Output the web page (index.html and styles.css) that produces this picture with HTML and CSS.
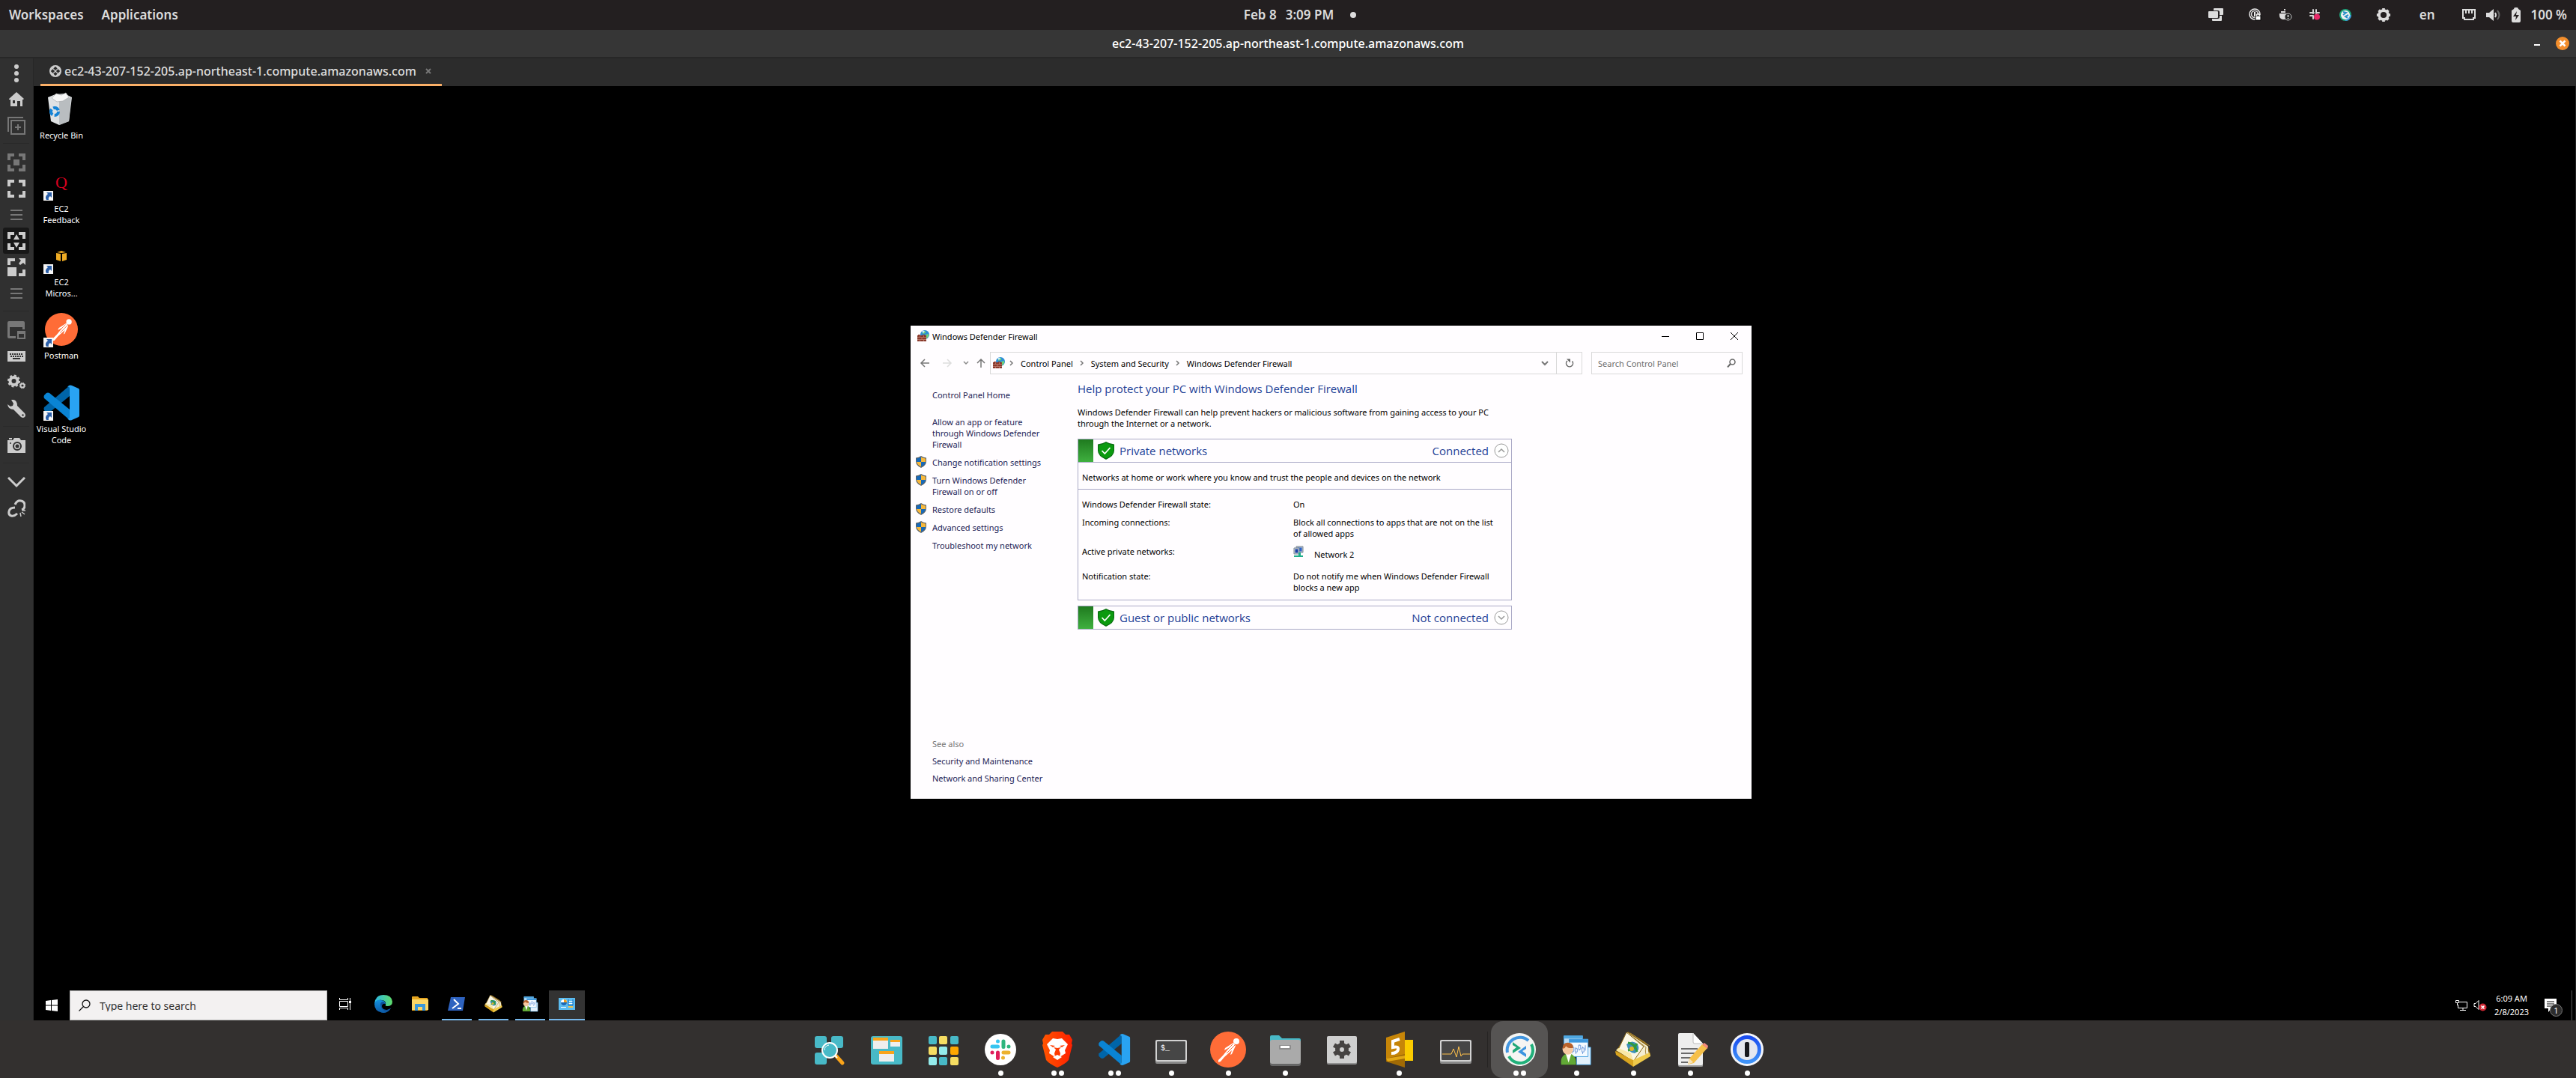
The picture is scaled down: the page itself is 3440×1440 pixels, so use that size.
FILE: index.html
```html
<!DOCTYPE html>
<html lang="en">
<head>
<meta charset="utf-8">
<title>ec2-43-207-152-205.ap-northeast-1.compute.amazonaws.com</title>
<link rel="stylesheet" href="styles.css">
</head>
<body>
<svg class="defs" aria-hidden="true">
  <defs>
    <linearGradient id="edge-a" x1="0" y1="0" x2="1" y2="0"><stop offset="0" stop-color="#2bb8e8"/><stop offset="1" stop-color="#5fdc6a"/></linearGradient>
    <linearGradient id="edge-b" x1="0" y1="0" x2="0" y2="1"><stop offset="0" stop-color="#1490df"/><stop offset="1" stop-color="#0c59a4"/></linearGradient>
    <linearGradient id="brave-g" x1="0" y1="0" x2="1" y2="0"><stop offset="0" stop-color="#ff5500"/><stop offset="1" stop-color="#ff2000"/></linearGradient>
    <linearGradient id="one-g" x1="0" y1="0" x2="0" y2="1"><stop offset="0" stop-color="#1a4df0"/><stop offset="1" stop-color="#3f93f8"/></linearGradient>
  </defs>
  <symbol id="vscode" viewBox="0 0 48 48">
    <path d="M35 1 L1 30 q-1 2 0 4 l3 3 q2 1 4 0 L35 15z" fill="#0065a9"/>
    <path d="M35 47 L1 18 q-1-2 0-4 l3-3 q2-1 4 0 L35 33z" fill="#0a84d4"/>
    <path d="M34 1 q2-1 4 0 l9 4 q1 1 1 2 v34 q0 1-1 2 l-9 4 q-2 1-4 0 l-2-2 q3 1 3-2 V5 q0-3-3-2z" fill="#29a3f2"/>
  </symbol>
  <symbol id="postman" viewBox="0 0 48 48">
    <circle cx="24" cy="24" r="24" fill="#ff6c37"/>
    <circle cx="35" cy="13" r="4" fill="#fff"/>
    <path d="M31 15 L20 22 l-1 3 7-4 -9 11 -6 6 v3 l3-1 5-6 10-9 -2 6 2-1 5-11z" fill="#fff"/>
    <path d="M33 18 L22 29 M30 17 L23 24" stroke="#ff6c37" stroke-width="1"/>
  </symbol>
  <symbol id="shortcut" viewBox="0 0 13 13">
    <path d="M0 0h13v13H0z" fill="#f5f5f5"/><path d="M4 2h7v7L9 7q-3 2-2 5H4Q1 8 6 4z" fill="#2b5fa8"/>
  </symbol>
  <symbol id="firewall" viewBox="0 0 16 16">
    <circle cx="10" cy="6" r="6" fill="#2d8fd5"/><path d="M8 1q4 0 3 3l-4 1zM11 6l4-1q1 4-3 6z" fill="#6fd07b"/><path d="M6 2q2-2 4-1l-2 3z" fill="#cdeefc"/>
    <path d="M1 6h3v1h3V6h3v1h2v8H0V7h1z" fill="#8a3a2c"/><path d="M0 9.500h12M0 12.500h12M3.500 7v2.500M8.500 7v2.500M6 10v2.500M3.500 13v2M8.500 13v2" stroke="#c58b7c" stroke-width=".7"/>
  </symbol>
  <symbol id="uac" viewBox="0 0 14 16">
    <path d="M7 0q3 2 7 2.500V7q0 6-7 9Q0 13 0 7V2.500Q4 2 7 0z" fill="#5c6368"/>
    <path d="M7 1.500V8H1V3.500Q5 3 7 1.500z" fill="#1769b8"/><path d="M7 1.500V8h6V3.500Q9 3 7 1.500z" fill="#f7b83b"/>
    <path d="M1 8h6v6.500Q2 12 1 8z" fill="#f7b83b"/><path d="M13 8H7v6.500Q12 12 13 8z" fill="#1769b8"/>
  </symbol>
  <symbol id="okshield" viewBox="0 0 22 24">
    <path d="M11 0q5 3 11 3.500V12q0 7-11 12Q0 19 0 12V3.500Q6 3 11 0z" fill="#0a6d12"/>
    <path d="M11 1.500q5 2.500 9.800 3V12q0 6.500-9.800 10.600Q1.200 18.500 1.200 12V4.500Q6 4 11 1.500z" fill="#0b9a0f"/>
    <path d="M5.500 12l3.800 4L16.500 8" fill="none" stroke="#fff" stroke-width="1.700"/>
  </symbol>
  <symbol id="book" viewBox="0 0 48 48">
    <path d="M17 0 L40 14 q4 3 7 17 L24 46 0 28z" fill="#8a6410"/>
    <path d="M16 1 L44 20 q-1 8 3 12 L24 44z" fill="#f4edcf"/><path d="M18 3 L41 21 q-2 8 2 13M20 2 L46 19" fill="none" stroke="#a8873a" stroke-width="1"/>
    <path d="M15 1 L38 20 24 40 3 26z" fill="#fbf7e6" stroke="#8a6a1c" stroke-width="1"/>
    <path d="M0 26 l24 12 v9 L1 31z" fill="#d9a520"/><path d="M24 38 l22-10 1 5-23 14z" fill="#efc94a"/><path d="M1 25 l23 13-3-9-17-7z" fill="#f9e9a5"/>
    <path d="M15 17q8-7 15 0q4 8-4 12q-8 0-11-12z" fill="#3c8fbb"/><path d="M17 15q10 1 12 12M29 16q-4 8-12 9" stroke="#2f9a3f" stroke-width="3" fill="none"/><circle cx="22" cy="23" r="3" fill="#e0b52b"/>
  </symbol>
  <symbol id="trader" viewBox="0 0 48 48">
    <path d="M6 3h28v22H6z" fill="#b9dcf5" stroke="#3f9bdc"/><path d="M6 3h28v4H6z" fill="#4fa8e2"/>
    <path d="M25 20h21v26H25z" fill="#e3f1fc" stroke="#3f9bdc"/><path d="M14 8h28v26H14z" fill="#f4faff" stroke="#3f9bdc"/><path d="M14 8h28v5H14z" fill="#3c97dd"/>
    <path d="M19 17v12M24 20v10M29 16v9M34 19v11M38 17v8" stroke="#5e8fd8"/><path d="M18 20h3v6h-3zM23 22h3v5h-3zM28 17h3v6h-3zM33 21h3v6h-3z" fill="#fff" stroke="#5e8fd8"/>
    <path d="M2 46q-2-15 11-17 12 2 11 17z" fill="#62a936"/><path d="M9 30l4 13 4-13z" fill="#fff"/><circle cx="12" cy="23" r="8" fill="#f6c9a0"/><path d="M4 22q0-9 8-9t8 8q-8 1-11-3-1 4-5 4z" fill="#b9622b"/>
  </symbol>
</svg>

<header class="topbar">
  <nav class="topbar-left"><button>Workspaces</button><button>Applications</button></nav>
  <button class="clock"><span>Feb 8</span><span>3:09 PM</span><i class="dot"></i></button>
  <div class="tray">
    <button class="tray-tile" aria-label="Tiling"><svg width="20" height="18" viewBox="0 0 20 18"><path d="M8 0h11q1 0 1 1v7q0 1-1 1h-4V5q0-2-2-2H7V1q0-1 1-1zM1 4h11q1 0 1 1v7q0 1-1 1H1q-1 0-1-1V5q0-1 1-1zM5 14h8q2 0 2-2v-2h3v6q0 1-1 1H6q-1 0-1-1z" fill="#dcdcdc"/></svg></button>
    <button aria-label="1Password"><svg width="18" height="18" viewBox="0 0 18 18"><circle cx="8" cy="8" r="7" fill="none" stroke="#eee" stroke-width="1.500"/><circle cx="8" cy="8" r="4.500" fill="none" stroke="#ddd" stroke-width="1.500"/><path d="M8 5v6" stroke="#eee" stroke-width="2"/><path d="M9 10h7v6H9z" fill="#fff" stroke="#000"/><path d="M10.500 10V8.500q2-2 4 0V10" stroke="#fff" stroke-width="1.300" fill="none"/></svg></button>
    <button aria-label="Docker"><svg width="18" height="18" viewBox="0 0 18 18"><path d="M1 7h10l4 1q-1 7-8 7T1 7zM3 4h6v2H3zM7 1h2v2H7z" fill="#ddd"/><circle cx="12.500" cy="11.500" r="4.500" fill="#222" stroke="#ccc"/><path d="M12.500 9v3m0 1v1" stroke="#eee" stroke-width="1.500"/></svg></button>
    <button aria-label="Slack"><svg width="18" height="18" viewBox="0 0 18 18"><path d="M6 2v5M10 2v5M2 6h5M10 6h4M2 10h4M6 10v4" stroke="#d6d6d6" stroke-width="2" stroke-linecap="round"/><circle cx="11" cy="11.500" r="4" fill="#e62a68"/></svg></button>
    <button aria-label="Remmina"><svg width="18" height="18" viewBox="0 0 18 18"><circle cx="9" cy="9" r="8" fill="#1fa67c"/><path d="M17 9a8 8 0 0 1-8 8l2-8z" fill="#3f9ce0"/><circle cx="9" cy="9" r="6" fill="#f1f1f1"/><path d="M6 5l4 1-4 3M12 13l-3-2 4-2" fill="none" stroke="#2a90c8" stroke-width="2"/></svg></button>
    <button class="tray-gear" aria-label="Settings"><svg width="20" height="20" viewBox="0 0 22 22"><path d="M11 1v20M1 11h20M4 4l14 14M18 4L4 18" stroke="#dcdcdc" stroke-width="4"/><circle cx="11" cy="11" r="6.500" fill="#231f20" stroke="#dcdcdc" stroke-width="4"/></svg></button>
    <button class="lang">en</button>
    <button class="tray-status" aria-label="Network, sound and battery">
      <svg width="20" height="18" viewBox="0 0 20 18"><path d="M2 2h16v11h-2v2H4v-2H2z" fill="none" stroke="#dcdcdc" stroke-width="2"/><path d="M6 3v4M10 3v4M14 3v4" stroke="#dcdcdc" stroke-width="2"/></svg>
      <svg width="20" height="18" viewBox="0 0 20 18"><path d="M0 6h4l6-5v16l-6-5H0z" fill="#dcdcdc"/><path d="M12 6q2 3 0 6" fill="none" stroke="#dcdcdc" stroke-width="2"/><path d="M15 3q5 6 0 12" fill="none" stroke="#666" stroke-width="2"/></svg>
      <svg width="14" height="20" viewBox="0 0 14 20"><path d="M4 2q0-2 2-2h2q2 0 2 2l3 2v14q0 2-2 2H3q-2 0-2-2V4z" fill="#dcdcdc"/><path d="M8 5L3 12h4l-1 5 5-7H7z" fill="#231f20"/></svg>
      <span>100 %</span>
    </button>
  </div>
</header>

<div class="titlebar">
  <h1>ec2-43-207-152-205.ap-northeast-1.compute.amazonaws.com</h1>
  <div class="titlebar-buttons">
    <button aria-label="Minimize"><svg width="18" height="20" viewBox="0 0 18 20"><path d="M5 12h8" stroke="#fff" stroke-width="2"/></svg></button>
    <button aria-label="Close"><svg width="20" height="20" viewBox="0 0 20 20"><circle cx="10" cy="10" r="9" fill="#f28e2c"/><path d="M6.500 6.500l7 7m0-7l-7 7" stroke="#fff" stroke-width="2.500"/></svg></button>
  </div>
</div>

<div class="client">
  <aside class="tools">
    <button aria-label="Menu"><svg viewBox="0 0 24 24"><circle cx="12" cy="3" r="3" fill="#ccc"/><circle cx="12" cy="12" r="3" fill="#ccc"/><circle cx="12" cy="21" r="3" fill="#ccc"/></svg></button>
    <button aria-label="Home"><svg viewBox="0 0 24 24"><path d="M12 2l10 9-1 1h-1v9h-3v-7h-4v7H4v-9H2v-1z" fill="#ccc"/><path d="M7 13h3v4H7z" fill="#303030"/></svg></button>
    <button aria-label="Duplicate connection"><svg viewBox="0 0 24 24"><path d="M1 20V1h20M5 5h18v18H5zM14 10v8M10 14h8" fill="none" stroke="#777" stroke-width="2"/></svg></button>
    <hr>
    <button aria-label="Resize to fit"><svg viewBox="0 0 24 24"><path d="M2 9V2h7M15 2h7v7M22 15v7h-7M9 22H2v-7" fill="none" stroke="#777" stroke-width="4"/><path d="M8 8h8v8H8z" fill="#777"/></svg></button>
    <button aria-label="Fullscreen"><svg viewBox="0 0 24 24"><path d="M2 9V2h7M15 2h7v7M22 15v7h-7M9 22H2v-7" fill="none" stroke="#ccc" stroke-width="4"/></svg></button>
    <button aria-label="Fullscreen options"><svg viewBox="0 0 24 24"><path d="M4 6h16M4 12h16M4 18h16" stroke="#777" stroke-width="2"/></svg></button>
    <button class="on" aria-label="Dynamic resolution"><svg viewBox="0 0 24 24"><path d="M2 9V2h7M15 2h7v7M22 15v7h-7M9 22H2v-7" fill="none" stroke="#ccc" stroke-width="4"/><path d="M12 3l4 7H8zM12 21l4-7H8z" fill="#ccc"/></svg></button>
    <button aria-label="Scaled mode"><svg viewBox="0 0 24 24"><path d="M2 9V2h8M22 15v7h-7" fill="none" stroke="#ccc" stroke-width="4"/><path d="M0 12h12v12H0zM15 0h9v9l-3-3-4 3-2-2 3-4z" fill="#ccc"/></svg></button>
    <button aria-label="Scaling options"><svg viewBox="0 0 24 24"><path d="M4 6h16M4 12h16M4 18h16" stroke="#777" stroke-width="2"/></svg></button>
    <hr>
    <button aria-label="Multi monitor"><svg viewBox="0 0 24 24"><path d="M2 0h19q2 0 2 2v9h-3V8H3v12h8v3H2q-2 0-2-2V2q0-2 2-2zM13 13h11v11H13zM15 17v5h7v-5z" fill="#777" fill-rule="evenodd"/></svg></button>
    <button aria-label="Grab keyboard"><svg viewBox="0 0 24 24"><path d="M0 5h24v14H0z" fill="#ccc"/><path d="M3 9h18M4 12h17" stroke="#303030" stroke-width="2" stroke-dasharray="2 1"/><path d="M7 15h10" stroke="#303030" stroke-width="2"/></svg></button>
    <button aria-label="Preferences"><svg viewBox="0 0 24 24"><circle cx="8.500" cy="10" r="5" fill="none" stroke="#ccc" stroke-width="4"/><circle cx="8.500" cy="10" r="7.500" fill="none" stroke="#ccc" stroke-width="2" stroke-dasharray="3 2.890"/><circle cx="20" cy="16" r="2.600" fill="none" stroke="#ccc" stroke-width="2"/><circle cx="20" cy="16" r="3.800" fill="none" stroke="#ccc" stroke-width="1" stroke-dasharray="1.500 1.480"/></svg></button>
    <button aria-label="Tools"><svg viewBox="0 0 24 24"><path d="M5 0q8-1 8 8l10 10q2 3 0 5t-5 0L8 13q-7 0-8-7l4 3 3-1 1-3z" fill="#ccc"/><circle cx="20.500" cy="20.500" r="1.200" fill="#303030"/></svg></button>
    <hr>
    <button aria-label="Screenshot"><svg viewBox="0 0 24 24"><path d="M0 5h7l2-3h7l2 3h6v17H0zM2 2h4v2H2z" fill="#ccc"/><circle cx="13" cy="13" r="5" fill="none" stroke="#303030" stroke-width="2"/><circle cx="13" cy="13" r="2.500" fill="#303030"/><circle cx="4" cy="9" r="1" fill="#303030"/></svg></button>
    <hr>
    <button aria-label="Minimize window"><svg viewBox="0 0 24 24"><path d="M1 6l11 11L23 6" fill="none" stroke="#ccc" stroke-width="3"/></svg></button>
    <button aria-label="Disconnect"><svg viewBox="0 0 24 24"><path d="M10 7q3-6 8-5t5 6-4 6M10 11q-7 0-8 5t3 6 8-3" fill="none" stroke="#ccc" stroke-width="3"/><path d="M17 18l1 5M19 17l4 3M20 15h4" stroke="#ccc" stroke-width="1.500"/></svg></button>
  </aside>

  <main class="session">
    <div class="tabs">
      <div class="tab"><svg width="16" height="16" viewBox="0 0 18 18"><circle cx="9" cy="9" r="9" fill="#ccc"/><path d="M9 2l3 3-3 3-3-3zM9 10l3 3-3 3-3-3zM5 6l3 3-3 3-3-3zM13 6l3 3-3 3-3-3z" fill="#2c2c2c"/></svg><span>ec2-43-207-152-205.ap-northeast-1.compute.amazonaws.com</span><button aria-label="Close tab"><svg width="8" height="8" viewBox="0 0 8 8"><path d="M1 1l6 6m0-6L1 7" stroke="#777" stroke-width="2"/></svg></button></div>
    </div>

    <div class="remote">
      <div class="desktop">
        <ul class="shortcuts">
          <li><div class="pic"><svg width="48" height="48" viewBox="0 0 48 48"><path d="M6 8l10-4 12-1 10 5-4 32-13 5-11-5z" fill="#dfe2e4"/><path d="M21 12l16-4-3 32-13 5z" fill="#b9bdc0"/><path d="M11 9l6-6 7 2 6-3 4 6-8 5-8 1z" fill="#f7f7f7" stroke="#a5a8aa" stroke-width=".7"/><circle cx="15" cy="27" r="5" fill="none" stroke="#1483d6" stroke-width="4" stroke-dasharray="8 2.500"/></svg></div><span>Recycle Bin</span></li>
          <li><div class="pic"><span class="quora">Q</span><svg class="arrow"><use href="#shortcut"/></svg></div><span>EC2<br>Feedback</span></li>
          <li><div class="pic"><svg width="14" height="14" viewBox="0 0 14 14"><path d="M0 3l6 1v10l-6-2zM14 3L8 4v10l6-2zM1 2l6-2 6 2-6 1z" fill="#efac24"/></svg><svg class="arrow"><use href="#shortcut"/></svg></div><span>EC2<br>Micros...</span></li>
          <li><div class="pic"><svg width="44" height="44"><use href="#postman"/></svg><svg class="arrow"><use href="#shortcut"/></svg></div><span>Postman</span></li>
          <li><div class="pic"><svg width="48" height="48"><use href="#vscode"/></svg><svg class="arrow"><use href="#shortcut"/></svg></div><span>Visual Studio Code</span></li>
        </ul>

        <section class="window">
          <div class="caption">
            <svg width="16" height="16"><use href="#firewall"/></svg><h2>Windows Defender Firewall</h2>
            <button aria-label="Minimize"><svg width="10" height="10"><path d="M0 5.500h10" stroke="#000"/></svg></button>
            <button aria-label="Maximize"><svg width="10" height="10"><path d="M.5.5h9v9h-9z" fill="none" stroke="#000"/></svg></button>
            <button aria-label="Close"><svg width="10" height="10"><path d="M0 0l10 10m0-10L0 10" stroke="#000"/></svg></button>
          </div>
          <div class="navrow">
            <div class="history">
              <button aria-label="Back"><svg width="14" height="12" viewBox="0 0 14 12"><path d="M13 6H2M7 1L2 6l5 5" fill="none" stroke="#777" stroke-width="1.500"/></svg></button>
              <button aria-label="Forward"><svg width="14" height="12" viewBox="0 0 14 12"><path d="M1 6h11M7 1l5 5-5 5" fill="none" stroke="#ddd" stroke-width="1.500"/></svg></button>
              <button class="recent" aria-label="Recent locations"><svg width="8" height="6" viewBox="0 0 8 6"><path d="M1 1l3 3 3-3" fill="none" stroke="#888" stroke-width="1.500"/></svg></button>
              <button class="up" aria-label="Up"><svg width="12" height="14" viewBox="0 0 12 14"><path d="M6 13V2M1 7l5-5 5 5" fill="none" stroke="#777" stroke-width="1.500"/></svg></button>
            </div>
            <div class="address">
              <svg width="16" height="16"><use href="#firewall"/></svg>
              <svg class="sep" viewBox="0 0 6 8"><path d="M1 1l3 3-3 3" fill="none" stroke="#777" stroke-width="1.500"/></svg><a href="#">Control Panel</a>
              <svg class="sep" viewBox="0 0 6 8"><path d="M1 1l3 3-3 3" fill="none" stroke="#777" stroke-width="1.500"/></svg><a href="#">System and Security</a>
              <svg class="sep" viewBox="0 0 6 8"><path d="M1 1l3 3-3 3" fill="none" stroke="#777" stroke-width="1.500"/></svg><a href="#">Windows Defender Firewall</a>
              <button class="drop" aria-label="Previous locations"><svg width="10" height="8" viewBox="0 0 10 8"><path d="M1 2l4 4 4-4" fill="none" stroke="#777" stroke-width="2"/></svg></button>
              <button class="refresh" aria-label="Refresh"><svg width="12" height="12" viewBox="0 0 12 12"><path d="M9.500 3.500A4.500 4.500 0 1 1 3 3" fill="none" stroke="#666" stroke-width="1.500"/><path d="M2 .5h5v5z" fill="#666"/></svg></button>
            </div>
            <label class="find"><input type="text" placeholder="Search Control Panel" aria-label="Search Control Panel"><svg width="12" height="12" viewBox="0 0 12 12"><circle cx="7.500" cy="4.500" r="3.500" fill="none" stroke="#666" stroke-width="1.500"/><path d="M5 7L1 11.500" stroke="#666" stroke-width="2"/></svg></label>
          </div>
          <div class="pane">
            <nav class="tasks">
              <a class="home" href="#">Control Panel Home</a>
              <a href="#">Allow an app or feature through Windows Defender Firewall</a>
              <a href="#"><svg><use href="#uac"/></svg>Change notification settings</a>
              <a href="#"><svg><use href="#uac"/></svg>Turn Windows Defender Firewall on or off</a>
              <a href="#"><svg><use href="#uac"/></svg>Restore defaults</a>
              <a href="#"><svg><use href="#uac"/></svg>Advanced settings</a>
              <a href="#">Troubleshoot my network</a>
              <div class="also">
                <span>See also</span>
                <a href="#">Security and Maintenance</a>
                <a href="#">Network and Sharing Center</a>
              </div>
            </nav>
            <article>
              <h3>Help protect your PC with Windows Defender Firewall</h3>
              <p>Windows Defender Firewall can help prevent hackers or malicious software from gaining access to your PC through the Internet or a network.</p>
              <section class="network">
                <header><i></i><svg width="22" height="24"><use href="#okshield"/></svg><h4>Private networks</h4><span>Connected</span><button aria-label="Collapse"><svg width="20" height="20" viewBox="0 0 20 20"><circle cx="10" cy="10" r="9" fill="#fff" stroke="#999"/><path d="M6 12l4-4 4 4" fill="none" stroke="#999" stroke-width="1.500"/></svg></button></header>
                <p>Networks at home or work where you know and trust the people and devices on the network</p>
                <table>
                  <tr><th scope="row">Windows Defender Firewall state:</th><td>On</td></tr>
                  <tr><th scope="row">Incoming connections:</th><td>Block all connections to apps that are not on the list of allowed apps</td></tr>
                  <tr><th scope="row">Active private networks:</th><td class="net"><svg width="14" height="16" viewBox="0 0 14 16"><path d="M4 1h9v8H4z" fill="#b9c3cf" stroke="#7a8794"/><path d="M5.500 2.500h6v5h-6z" fill="#2d62c9"/><path d="M1 3h7v8H1z" fill="#cdd5de" stroke="#7a8794"/><path d="M2.500 4.500h4v5h-4z" fill="#1b3fa5"/><path d="M7 9h3v4h3v2H1v-2h6z" fill="#1fae8b"/></svg><span>Network 2</span></td></tr>
                  <tr><th scope="row">Notification state:</th><td>Do not notify me when Windows Defender Firewall blocks a new app</td></tr>
                </table>
              </section>
              <section class="network">
                <header><i></i><svg width="22" height="24"><use href="#okshield"/></svg><h4>Guest or public networks</h4><span>Not connected</span><button aria-label="Expand"><svg width="20" height="20" viewBox="0 0 20 20"><circle cx="10" cy="10" r="9" fill="#fff" stroke="#999"/><path d="M6 8l4 4 4-4" fill="none" stroke="#999" stroke-width="1.500"/></svg></button></header>
              </section>
            </article>
          </div>
        </section>
      </div>

      <footer class="taskbar">
        <button class="start" aria-label="Start"><svg width="16" height="16" viewBox="0 0 16 16"><path d="M0 2l7-1v6.500H0zM8 1l8-1v7.500H8zM0 8.500h7V15l-7-1zM8 8.500h8V16l-8-1z" fill="#fff"/></svg></button>
        <label class="search"><svg width="16" height="16" viewBox="0 0 16 16"><circle cx="10" cy="6" r="5" fill="none" stroke="#111" stroke-width="1.300"/><path d="M6.500 9.500L.5 15.500" stroke="#111" stroke-width="1.300"/></svg><input type="text" placeholder="Type here to search" aria-label="Type here to search"></label>
        <button class="app" aria-label="Task View"><svg width="16" height="16" viewBox="0 0 16 16"><path d="M.5 0v2.500h11V0M.5 16v-2.500h11V16M.5 4.500h11v7H.5zM14.500 0v16" fill="none" stroke="#fff"/><path d="M13 4h3v3h-3z" fill="#fff"/></svg></button>
        <button class="app" aria-label="Microsoft Edge"><svg width="24" height="24" viewBox="0 0 24 24"><path d="M0 12Q1 0 12 0t12 9q0 6-7 6-3 0-2-2 1-5-5-6T0 12z" fill="url(#edge-a)"/><path d="M0 12q2-6 8-5 6 0 7 5-4-2-5 2-1 6 7 6l5-2q-4 6-10 6Q0 23 0 12z" fill="url(#edge-b)"/><path d="M8 12q1-3 4-3l3 3q-4-1-5 2-1 6 7 6l5-2q-3 4-7 4-7-3-7-10z" fill="#0d4f98"/></svg></button>
        <button class="app" aria-label="File Explorer"><svg width="22" height="20" viewBox="0 0 22 20"><path d="M0 1q0-1 1-1h7l2 2h11v17H0z" fill="#e5a520"/><path d="M0 4h22v14H0z" fill="#fcd767"/><path d="M4 10h14v9h-4v-5H8v5H4z" fill="#3b98d9"/></svg></button>
        <button class="app run" aria-label="PowerShell"><svg width="24" height="20" viewBox="0 0 24 20"><path d="M4 1h19l-3 18H0z" fill="#2e63c0"/><path d="M8 4l6 6-8 6M13 16h5" fill="none" stroke="#fff" stroke-width="2"/></svg></button>
        <button class="app run" aria-label="MetaEditor"><svg width="24" height="24"><use href="#book"/></svg></button>
        <button class="app run" aria-label="MetaTrader"><svg width="22" height="22"><use href="#trader"/></svg></button>
        <button class="app run current" aria-label="Control Panel"><svg width="22" height="18" viewBox="0 0 22 18"><path d="M0 1h22v16H0z" fill="#5bbcf0"/><circle cx="7" cy="7" r="4" fill="#fff"/><path d="M7 3a4 4 0 0 1 4 4H7z" fill="#f2a01e"/><path d="M7 7h4a4 4 0 0 1-8 0z" fill="#1769b8"/><path d="M14 5h5v1h-5zM13 8h6v1h-6zM3 13h7v1H3z" fill="#fff"/><path d="M13 3v8h6V3" fill="none" stroke="#1769b8"/><path d="M13 12h6v2h-6z" fill="#f2c34a"/></svg></button>
        <div class="notify">
          <button aria-label="Network"><svg width="16" height="14" viewBox="0 0 16 14"><path d="M4 2.500h11.500v8H3.500V6M10 11v2M6 13.500h8" fill="none" stroke="#fff"/><path d="M.5.5h4v3h-4zM2.500 4v3" fill="none" stroke="#fff"/></svg></button>
          <button aria-label="Volume"><svg width="18" height="16" viewBox="0 0 18 16"><path d="M1 5.500h2l4-4v12l-4-4H1z" fill="none" stroke="#fff"/><circle cx="12.500" cy="10.500" r="5" fill="#cf2733"/><path d="M10.500 8.500l4 4m0-4l-4 4" stroke="#fff" stroke-width="1.500"/></svg></button>
          <button class="time"><span>6:09 AM</span><span>2/8/2023</span></button>
          <button class="center" aria-label="Notifications"><svg width="16" height="18" viewBox="0 0 16 18"><path d="M0 0h16v13H9l-4 5v-5H0z" fill="#fff"/><path d="M3 4h10M3 7h10M3 10h7" stroke="#000"/></svg><span class="badge">1</span></button>
        </div>
      </footer>
    </div>
  </main>
</div>

<nav class="dock">
  <button aria-label="Launcher"><svg viewBox="0 0 48 48"><path d="M7 6h10q3 0 3 3v10q0 3-3 3H7q-3 0-3-3V9q0-3 3-3zM29 6h10q3 0 3 3v10q0 3-3 3H29q-3 0-3-3V9q0-3 3-3zM7 28h10q3 0 3 3v10q0 3-3 3H7q-3 0-3-3V31q0-3 3-3z" fill="#48b9c7"/><path d="M33 33l8 9" stroke="#faa41a" stroke-width="5" stroke-linecap="round"/><circle cx="24" cy="25" r="10" fill="#48b9c7" stroke="#fff" stroke-width="2"/><path d="M31 32l3 3" stroke="#fff" stroke-width="2"/><path d="M17 25q0-6 6-7" fill="none" stroke="#fff"/></svg></button>
  <button aria-label="Workspaces"><svg viewBox="0 0 48 48"><rect x="3" y="6" width="42" height="38" rx="3" fill="#48b9c7"/><path d="M6 9h20v14H6zM29 12h13v8H29zM14 27h20v13H14z" fill="#eee"/><path d="M6 8h20v4H6zM29 11h13v3H29zM14 26h20v4H14z" fill="#faa41a"/></svg></button>
  <button aria-label="Applications"><svg viewBox="0 0 48 48"><g fill="#48b9c7"><rect x="4" y="6" width="11" height="11" rx="2"/><rect x="33" y="6" width="11" height="11" rx="2"/><rect x="18" y="34" width="11" height="11" rx="2"/></g><g fill="#f6dd62"><rect x="18" y="6" width="11" height="11" rx="2"/><rect x="4" y="20" width="11" height="11" rx="2"/><rect x="33" y="34" width="11" height="11" rx="2"/></g><g fill="#94ebeb"><rect x="18" y="20" width="11" height="11" rx="2"/><rect x="4" y="34" width="11" height="11" rx="2"/></g><rect x="33" y="20" width="11" height="11" rx="2" fill="#ffa800"/></svg></button>
  <button class="one" aria-label="Slack"><svg viewBox="0 0 48 48"><circle cx="24" cy="24" r="21" fill="#fff"/><g fill="none" stroke-width="5" stroke-linecap="round"><path d="M20.500 13v.1M13 20h7.500" stroke="#36c5f0"/><path d="M28 13v7.500M35 20v.1" stroke="#2eb67d"/><path d="M27.500 35v.1M28 28h7" stroke="#ecb22e"/><path d="M20.500 28v7.500M13 28v.1" stroke="#e01e5a"/></g></svg></button>
  <button class="two" aria-label="Brave"><svg viewBox="0 0 48 48"><path d="M17 0h14l4 4h5l4 7-1 5 1 2-5 20q-4 5-15 10Q13 43 9 38L4 18l1-2-1-5 4-7h5z" fill="url(#brave-g)"/><path d="M24 10l6-1 8 8-4 8 1 4-8 5 1-5-2-5 3-3-5 1-5-1 3 3-2 5 1 5-8-5 1-4-4-8 8-8z" fill="#fff"/><path d="M14 18l7 1-3 2zM34 18l-7 1 3 2z" fill="#ff3c00"/><path d="M24 31l6 3-6 4-6-4z" fill="#fff"/></svg></button>
  <button class="two" aria-label="Visual Studio Code"><svg viewBox="-3 -3 54 54"><use href="#vscode" width="48" height="48"/></svg></button>
  <button class="one" aria-label="Terminal"><svg viewBox="0 0 48 48"><rect x="3" y="12" width="42" height="31" rx="2" fill="#8a8a8a"/><rect x="3" y="11" width="42" height="29" rx="2" fill="#d2d2d2"/><rect x="5" y="13" width="38" height="25" rx="1" fill="#464646"/><text x="10" y="25" font-size="10" fill="#fff" font-family="Liberation Mono, monospace">$_</text></svg></button>
  <button class="one" aria-label="Postman"><svg viewBox="0 0 48 48"><use href="#postman" width="48" height="48"/></svg></button>
  <button class="one" aria-label="Files"><svg viewBox="0 0 48 48"><path d="M4 7q0-2 2-2h10l4 4h23q2 0 2 2v6H4z" fill="#48b9c7"/><rect x="4" y="14" width="41" height="32" rx="3" fill="#666"/><rect x="4" y="11" width="41" height="32" rx="3" fill="#aaa"/><rect x="16" y="18" width="16" height="6" rx="1" fill="#8d8d8d"/><path d="M18 19h12v3H18z" fill="#fff"/></svg></button>
  <button aria-label="Settings"><svg viewBox="0 0 48 48"><rect x="4" y="8" width="40" height="36" rx="2" fill="#909090"/><rect x="4" y="6" width="40" height="36" rx="2" fill="#cfcfcf"/><path d="M24 12v24M13.500 18l21 12M34.500 18l-21 12" stroke="#464342" stroke-width="6"/><circle cx="24" cy="24" r="6" fill="#cfcfcf" stroke="#464342" stroke-width="6"/></svg></button>
  <button class="one" aria-label="MetaTrader 5"><svg viewBox="0 0 48 48"><path d="M26 11h17v28H26z" fill="#fbcb00"/><path d="M7 8l25-8v35L7 40z" fill="#c68508"/><path d="M7 36l25-6v18L7 40z" fill="#a06a05"/><path d="M7 36l25-4v4L9 40z" fill="#e2a716"/><path d="M25 10l-9 3v8q8-2 7 3t-9 5" fill="none" stroke="#fff" stroke-width="4"/></svg></button>
  <button aria-label="System Monitor"><svg viewBox="0 0 48 48"><rect x="3" y="12" width="42" height="31" rx="2" fill="#8a8a8a"/><rect x="3" y="11" width="42" height="29" rx="2" fill="#d2d2d2"/><rect x="5" y="13" width="38" height="25" rx="1" fill="#464646"/><path d="M6 30h12l3-7 4 11 3-14 3 13 2-3h10" fill="none" stroke="#ffc14a" stroke-width="1"/></svg></button>
  <hr>
  <button class="two active" aria-label="Remmina"><svg viewBox="0 0 48 48"><circle cx="24" cy="24" r="22" fill="#f5f5f3"/><path d="M8 28A17 17 0 0 1 36 12" fill="none" stroke="#4296e0" stroke-width="4"/><path d="M40 17A17 17 0 0 1 10 33" fill="none" stroke="#20b07a" stroke-width="4"/><path d="M15 14l11 8-11 7v-4l5-4-5-3z" fill="#20a878"/><path d="M33 19l-11 8 11 7v-4l-5-4 5-3z" fill="#3c94df"/></svg></button>
  <button class="one" aria-label="MetaTrader"><svg viewBox="0 0 48 48"><use href="#trader" x="2" y="3" width="43" height="43"/></svg></button>
  <button class="one" aria-label="MetaEditor"><svg viewBox="0 0 48 48"><use href="#book" width="48" height="48"/></svg></button>
  <button class="one" aria-label="Text Editor"><svg viewBox="0 0 48 48"><path d="M10 4h18l13 13v29q0 1-2 1H10q-2 0-2-2V5q0-1 2-1z" fill="#999"/><path d="M10 2h18l13 14v27q0 2-2 2H10q-2 0-2-2V4q0-2 2-2z" fill="#eee"/><path d="M28 2l13 14H30q-2 0-2-2z" fill="#fff"/><path d="M28 2v12q0 2 2 2h11" fill="none" stroke="#bbb"/><path d="M12 23h22M12 29h20M12 35h14M12 41h9" stroke="#6a6a6a" stroke-width="2"/><path d="M21 44l2-8 17-19 7 5-18 20z" fill="#f6c04a"/><path d="M40 17l3-2 5 4-1 4z" fill="#f48a7c"/><path d="M21 44l2-8 5 5z" fill="#f6e3bd"/></svg></button>
  <button class="one" aria-label="1Password"><svg viewBox="0 0 48 48"><circle cx="24" cy="24" r="22" fill="#f4f5fa"/><circle cx="24" cy="24" r="16.500" fill="#e4e7f0" stroke="url(#one-g)" stroke-width="5"/><rect x="21" y="14" width="6" height="20" rx="2" fill="#16181f"/></svg></button>
</nav>
</body>
</html>
```
FILE: styles.css
```css
* { box-sizing: border-box; }

body {
  display: flex;
  flex-direction: column;
  height: 100vh;
  margin: 0;
  overflow: hidden;
  background: #000;
  color: #dcdcdc;
  font: 500 16px/20px "Noto Sans", "Open Sans", sans-serif;
}

h1, h2, h3, h4, p, ul { margin: 0; padding: 0; font: inherit; }
svg { display: block; flex: none; }
.defs { position: absolute; width: 0; height: 0; }

button {
  display: flex;
  align-items: center;
  justify-content: center;
  padding: 0;
  border: 0;
  background: none;
  color: inherit;
  font: inherit;
}

a { color: inherit; text-decoration: none; }

/* Desktop panel */
.topbar {
  display: grid;
  grid-template-columns: 1fr auto 1fr;
  align-items: center;
  height: 40px;
  padding: 0 12px;
  background: #231f20;
  font-size: 17px;
  font-weight: 600;
}
.topbar-left { display: flex; gap: 24px; }
.clock { gap: 12px; margin-left: 32px; }
.dot { width: 8px; height: 8px; margin-left: 10px; border-radius: 4px; background: #dcdcdc; }
.tray { display: flex; align-items: center; justify-content: flex-end; gap: 22px; }
.tray-tile { margin-right: 12px; }
.tray-gear { margin: 0 16px 0 10px; }
.tray .tray-status { gap: 13px; margin-left: 13px; }

.titlebar {
  display: grid;
  grid-template-columns: 1fr auto 1fr;
  align-items: center;
  height: 38px;
  padding: 0 8px;
  background: #363636;
  border-bottom: 2px solid #272727;
  color: #fff;
}
.titlebar h1 { grid-column: 2; }
.titlebar-buttons { display: flex; justify-content: flex-end; gap: 15px; }

/* Remote viewer */
.client { display: flex; flex: 1; min-height: 0; }

.tools {
  display: flex;
  flex-direction: column;
  width: 45px;
  padding: 2px 5px 0 4px;
  background: #303030;
  border-right: 1px solid #272727;
}
.tools button { height: 35px; border-radius: 3px; }
.tools svg { width: 24px; height: 24px; }
.tools .on { background: #181818; }
.tools hr { width: 100%; height: 1px; margin: 6px 0 7px; border: 0; background: #292929; }

.session { display: flex; flex: 1; flex-direction: column; min-width: 0; }
.tabs { display: flex; height: 37px; padding-left: 9px; background: #2c2c2c; }
.tab {
  display: flex;
  align-items: center;
  gap: 4px;
  padding: 0 14px 0 12px;
  border-bottom: 3px solid #fbb068;
}
.tab button { margin-left: 8px; }

.remote {
  display: flex;
  flex: 1;
  flex-direction: column;
  border-right: 1px solid #222;
  background: #000;
  font: 400 11px/15px "Noto Sans", "Open Sans", sans-serif;
}
.desktop { position: relative; flex: 1; }

.shortcuts { width: 74px; padding-top: 7px; list-style: none; color: #fff; text-align: center; }
.shortcuts li { display: flex; flex-direction: column; align-items: center; height: 98px; }
.pic { position: relative; display: grid; place-items: center; flex: none; width: 48px; height: 48px; margin-bottom: 3px; }
.arrow { position: absolute; left: 0; bottom: 0; width: 13px; height: 13px; }
.quora { color: #d8001f; font: 22px/22px "Liberation Serif", serif; }
.shortcuts li > span { padding: 0 2px; }

/* Firewall window */
.window {
  position: absolute;
  left: 1171px;
  top: 320px;
  display: flex;
  flex-direction: column;
  width: 1123px;
  height: 632px;
  background: #fffdff;
  color: #000;
}
.caption { display: flex; align-items: center; height: 28px; padding-left: 9px; }
.caption h2 { flex: 1; margin-left: 4px; }
.caption button { width: 46px; height: 28px; }

.navrow { display: flex; height: 43px; padding: 7px 12px 6px; }
.history { display: flex; align-items: center; width: 94px; gap: 16px; }
.history .recent { margin-left: -2px; }
.history .up { margin-left: -6px; }
.address { display: flex; flex: 1; align-items: center; padding-left: 3px; border: 1px solid #d9d9d9; }
.sep { width: 6px; height: 8px; margin: 0 9px 0 6px; }
.address a + .sep { margin-left: 9px; }
.drop { margin-left: auto; width: 30px; }
.refresh { width: 34px; height: 28px; border-left: 1px solid #d9d9d9; }
.find { display: flex; align-items: center; width: 202px; margin-left: 12px; padding: 0 8px; border: 1px solid #d9d9d9; }
input { flex: 1; min-width: 0; padding: 0; border: 0; outline: 0; background: none; font: inherit; }
input::placeholder { color: #6d6d6d; opacity: 1; }

.pane { display: flex; flex: 1; }
.tasks { display: flex; flex-direction: column; gap: 9px; width: 223px; padding: 14px 39px 20px 29px; color: #1c1c55; }
.tasks a { position: relative; }
.tasks .home { margin-bottom: 12px; }
.tasks svg { position: absolute; left: -22px; top: -1px; width: 14px; height: 16px; }
.also { display: flex; flex-direction: column; gap: 8px; margin-top: auto; }
.also span { color: #777; }

article { width: 580px; padding-top: 3px; }
article h3 { color: #1e3f96; font-family: "Open Sans", sans-serif; font-size: 15px; line-height: 20px; }
article > p { margin: 14px 0 13px; }
.network { margin-bottom: 7px; border: 1px solid #aaa9c6; }
.network header { display: flex; align-items: stretch; height: 30px; color: #1e3f96; font-family: "Open Sans", sans-serif; font-size: 15px; line-height: 30px; }
.network header i { width: 20px; background: linear-gradient(#1f7a1f, #3fb03f); }
.network header > svg { margin: 3px 7px 0 6px; }
.network h4 { flex: 1; }
.network header button { margin: 0 3px 0 7px; }
.network > p { padding: 12px 5px 8px; border: solid #aaa9c6; border-width: 1px 0; }
table { width: 100%; margin: 12px 0 0; border-spacing: 0; }
th, td { padding: 0 5px 9px; font-weight: 400; text-align: left; vertical-align: top; }
th { width: 287px; }
td { padding: 0 14px 9px 0; }
.net { display: flex; gap: 14px; height: 33px; }
.net span { padding-top: 4px; }

/* Remote taskbar */
.taskbar { display: flex; align-items: center; height: 40px; color: #fff; }
.start { width: 48px; height: 40px; }
.search { display: flex; align-items: center; gap: 12px; width: 344px; height: 40px; padding: 0 11px; border: 1px solid #bbb; background: #f3f1f1; font-size: 14px; }
.search input::placeholder { color: #333; }
.app { width: 40px; height: 40px; margin-left: 9px; padding-bottom: 2px; border-bottom: 2px solid transparent; }
.search + .app { margin: 0 2px 0 4px; }
.run { border-color: #76b9ed; }
.current { width: 48px; margin-left: 5px; background: #333; }
.notify { display: flex; align-items: center; gap: 8px; height: 40px; margin-left: auto; margin-right: 4px; padding-right: 20px; border-right: 1px solid #555; }
.time { flex-direction: column; margin-left: 2px; line-height: 18px; }
.center { position: relative; margin-left: 13px; }
.badge { position: absolute; left: 7px; top: 7px; width: 17px; height: 17px; border: 1px solid #777; border-radius: 9px; background: #2c2c2c; line-height: 15px; }

/* Dock */
.dock { display: flex; justify-content: center; height: 77px; padding-top: 1px; background: #33302f; }
.dock button { position: relative; width: 76px; height: 76px; }
.dock svg { width: 48px; height: 48px; }
.dock hr { width: 1px; height: 48px; margin: 14px 4px; border: 0; background: #262423; }
.dock .active { border-radius: 16px; background: #565453; }
.one::after, .two::after { content: ""; position: absolute; bottom: 3px; left: 35px; width: 7px; height: 7px; border-radius: 4px; background: #fff; }
.two::after { left: 30px; box-shadow: 10px 0 #fff; }
```
